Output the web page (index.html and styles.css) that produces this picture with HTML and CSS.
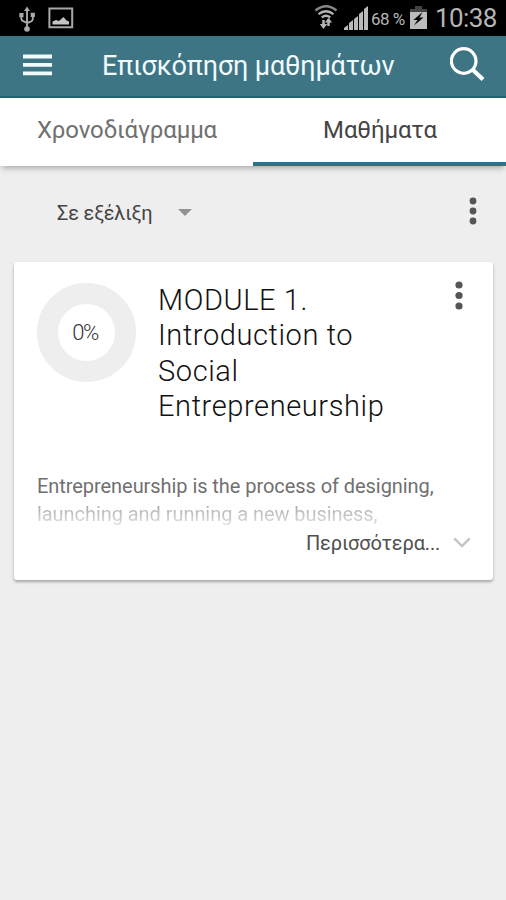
FILE: index.html
```html
<!DOCTYPE html>
<html lang="el">
<head>
<meta charset="utf-8">
<meta name="viewport" content="width=device-width, initial-scale=1">
<title>Επισκόπηση μαθημάτων</title>
<link rel="stylesheet" href="styles.css">
</head>
<body>
<div class="status">
  <svg class="usb" width="18" height="28" viewBox="0 0 18 28" fill="none" stroke="#aaa" stroke-width="1.900">
    <path d="M9 5v18M3.300 10v3.500q0 2 2 2.600L9 18M14.800 10v4q0 2-2 2.600L9 18"/>
    <path d="M9 1.500l3 4.500H6zM1.300 8h4.200v4.200H1.300zM12.700 7.800h4.200V12h-4.200z" fill="#aaa" stroke="none"/>
    <circle cx="9" cy="24" r="2.800" fill="#aaa" stroke="none"/>
  </svg>
  <svg class="photo" width="26" height="22" viewBox="0 0 26 22">
    <path d="M1.400 1.400h22.800v18.800H1.400z" fill="none" stroke="#a8a8a8" stroke-width="2"/>
    <path d="M4.500 17.500v-3l3.500-1.500 3 1 4.500-4 3 3.500 2.500 1v3z" fill="#c4c4c4"/>
  </svg>
  <svg class="wifi" width="24" height="26" viewBox="0 0 24 26" fill="none" stroke="#b4b4b4" stroke-width="2.300">
    <path d="M1.500 6.500q10.500-8.500 21 0" stroke="#888"/>
    <path d="M4.500 10.200q7.500-6 15 0M7.800 13.500q4.200-3.500 8.400 0"/>
    <path d="M9.500 16v7M14.500 15v7" stroke-width="2.500"/>
    <path d="M5.800 20h7.400l-3.700 5zM10.800 18.500h7.400l-3.700-4.500z" fill="#b4b4b4" stroke="none"/>
  </svg>
  <svg class="signal" width="24" height="24" viewBox="0 0 24 24" fill="#bbb">
    <path d="M0 24v-2l4-3v5zM5 24v-7l4-3v10zM10 24V13l4-3v14zM15 24V8l4-3v19zM20 24V3l4-3v24z"/>
  </svg>
  <span class="percent">68 %</span>
  <svg class="battery" width="17" height="23" viewBox="0 0 17 23">
    <path d="M5 0h7v3h5v4H0V3h5z" fill="#444"/>
    <path d="M0 6h17v17H0z" fill="#bbb"/>
    <path d="M12.500 6l-9 8h4L4 19.500l9.500-8h-4z" fill="#000"/>
  </svg>
  <span class="clock">10:38</span>
</div>
<header class="appbar">
  <svg class="menu" width="29" height="22" viewBox="0 0 29 22" fill="#f1fafc"><path d="M0 .6h29v3.800H0zM0 9.100h29v3.700H0zM0 17.400h29v3.800H0z"/></svg>
  <h1 class="title">Επισκόπηση μαθημάτων</h1>
  <svg class="search" width="36" height="36" viewBox="0 0 36 36" fill="none" stroke="#fff"><circle cx="13.700" cy="14" r="12.300" stroke-width="3.200"/><path d="M22.500 22.500L33 32.500" stroke-width="4.200"/></svg>
</header>
<nav class="tabs">
  <div class="tab"><span class="timeline">Χρονοδιάγραμμα</span></div>
  <div class="tab active"><span class="courses">Μαθήματα</span></div>
</nav>
<main>
  <div class="filter">
    <span class="progress">Σε εξέλιξη</span>
    <span class="caret"></span>
    <svg class="dots" width="8" height="28" viewBox="0 0 8 28" fill="#555"><circle cx="4" cy="4" r="3.400"/><circle cx="4" cy="14" r="3.400"/><circle cx="4" cy="24" r="3.400"/></svg>
  </div>
  <article class="card">
    <div class="card-head">
      <div class="ring"><span class="value">0%</span></div>
      <h2 class="course">MODULE 1.<br>Introduction to<br>Social<br><span>Entrepreneurship</span></h2>
      <svg class="dots" width="8" height="30" viewBox="0 0 8 30" fill="#555"><circle cx="4" cy="4" r="3.600"/><circle cx="4" cy="14.500" r="3.600"/><circle cx="4" cy="25" r="3.600"/></svg>
    </div>
    <p class="summary"><span>Entrepreneurship is the process of designing,</span><br><span class="faded">launching and running a new business,</span></p>
    <div class="more">
      <span class="more-label">Περισσότερα...</span>
      <svg width="18" height="12" viewBox="0 0 18 12" fill="none" stroke="#c4c4c4" stroke-width="2.400"><path d="M1.300 1.300L9 9l7.700-7.700"/></svg>
    </div>
  </article>
</main>
</body>
</html>
```
FILE: styles.css
```css
* { box-sizing: border-box; }
body {
  margin: 0;
  min-height: 900px;
  background: #eee;
  font-family: Roboto, "Noto Sans", sans-serif;
  color: #333;
  overflow: hidden;
}
h1, h2, p { margin: 0; font-weight: 400; }
svg { display: block; flex: none; }
span { white-space: nowrap; }
.status { display: flex; height: 36px; background: #000; color: #b5b5b5; }
.usb { margin: 5px 0 0 18px; }
.photo { margin: 7px 0 0 12px; }
.wifi { margin: 4px 0 0 240px; }
.signal { margin: 6px 0 0 6px; }
.percent { margin: 7px 0 0 3px; width: 35px; font-size: 17px; line-height: 24px; letter-spacing: -.5px; }
.battery { margin: 6px 0 0 4px; }
.clock { margin: 2px 0 0 8px; font-size: 26px; line-height: 32px; letter-spacing: -.6px; }
.appbar {
  display: flex;
  height: 62px;
  background: #3d7585;
  border-bottom: 2px solid #23636f;
  color: #f1fafc;
}
.menu { margin: 18px 0 0 23px; }
.title { margin: 13px 0 0 50px; width: 348px; font-size: 27px; line-height: 34px; letter-spacing: -.15px; }
.search { margin: 11px 0 0; }
.tabs {
  display: flex;
  height: 67.500px;
  background: #fff;
  box-shadow: 0 4px 6px -2px rgba(0, 0, 0, .3);
}
.tab {
  flex: 1;
  padding: 16px 0 0 1px;
  text-align: center;
  font-size: 24px;
  line-height: 32px;
  letter-spacing: -.12px;
  color: #707070;
}
.active { border-bottom: 4px solid #2f7186; color: #444; }
.filter { display: flex; height: 96px; padding-left: 57px; }
.progress { width: 121px; padding-top: 35px; font-size: 20px; line-height: 24px; letter-spacing: -.2px; color: #444; }
.caret {
  width: 0;
  height: 0;
  margin-top: 43px;
  border: 7px solid transparent;
  border-top-color: #929292;
  border-bottom: 0;
}
.filter .dots { margin: 31px 29px 0 auto; }
.card {
  height: 318px;
  margin: 0 13px 0 14px;
  background: #fff;
  border-radius: 3px;
  box-shadow: 0 2px 3px rgba(0, 0, 0, .3);
}
.card-head { display: flex; height: 210px; }
.ring {
  display: flex;
  align-items: center;
  justify-content: center;
  width: 99px;
  height: 99px;
  margin: 21px 0 0 23px;
  border: 21px solid #eee;
  border-radius: 50%;
}
.value { margin: 1px 3px 0 0; font-size: 22px; font-weight: 300; color: #333; letter-spacing: -1.5px; }
.course { margin: 21px 0 0 22px; font-size: 29px; font-weight: 300; line-height: 35.500px; letter-spacing: .6px; color: #111; }
.card-head .dots { margin: 19px 30px 0 auto; }
.summary { padding-left: 23px; font-size: 20px; line-height: 28px; letter-spacing: -.06px; color: #707070; }
.faded {
  background: linear-gradient(#aaa 15%, #ddd 90%);
  background-clip: text;
  color: transparent;
}
.more { display: flex; padding: 2px 0 0 292px; font-size: 20px; line-height: 26px; letter-spacing: -.15px; color: #505050; }
.more-label { width: 147px; }
.more svg { margin-top: 7px; }
```
